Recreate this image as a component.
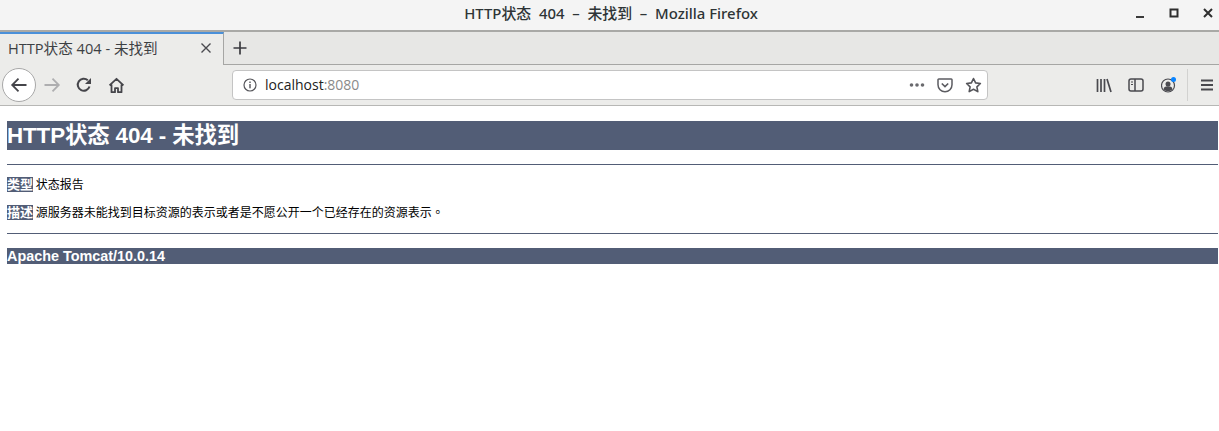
<div class="window">
	<header class="titlebar">
		<span class="title">HTTP状态&nbsp; 404 &nbsp;–&nbsp; 未找到 &nbsp;–&nbsp; Mozilla Firefox</span>
		<div class="winctl">
			<svg width="14" height="14" viewBox="0 0 14 14"><rect x="3" y="10" width="8" height="2" fill="#3a3a3a" /></svg>
			<svg width="14" height="14" viewBox="0 0 14 14"><rect x="3.500" y="3.500" width="7" height="7" fill="none" stroke="#2e2e2e" stroke-width="2" /></svg>
			<svg width="14" height="14" viewBox="0 0 14 14"><path d="M3 3l8 8M11 3l-8 8" stroke="#2e2e2e" stroke-width="2" fill="none" /></svg>
		</div>
	</header>

	<div class="tabbar">
		<div class="tab">
			<span class="tab-label">HTTP状态 404 - 未找到</span>
			<svg class="tab-close" width="12" height="12" viewBox="0 0 12 12"><path d="M1.500 1.500l9 9M10.500 1.500l-9 9" stroke="#4a4a4f" stroke-width="1.400" fill="none" /></svg>
		</div>
		<button class="newtab" aria-label="new tab">
			<svg width="16" height="16" viewBox="0 0 16 16"><path d="M8 1.500v13M1.500 8h13" stroke="#3b3b40" stroke-width="1.700" fill="none" /></svg>
		</button>
	</div>

	<nav class="navbar">
		<div class="back">
			<svg width="18" height="18" viewBox="0 0 18 18"><path d="M2 9h14.500M8.500 2.700L2.200 9l6.300 6.300" stroke="#45454a" stroke-width="1.800" fill="none" /></svg>
		</div>
		<svg class="forward" width="18" height="18" viewBox="0 0 18 18"><path d="M1.500 9h14.500M9.500 2.700L15.800 9l-6.300 6.300" stroke="#aeaeb0" stroke-width="1.800" fill="none" /></svg>
		<svg class="reload" width="16" height="16" viewBox="0 0 16 16"><path d="M13.500 9.500A6 6 0 1 1 11.800 3.300" stroke="#45454a" stroke-width="2" fill="none" /><path d="M15 1v6H9z" fill="#45454a" /></svg>
		<svg class="home" width="17" height="17" viewBox="0 0 17 17"><path d="M1.500 8.300L8.500 1.800l7 6.500M3.500 7.500v7.700h3.500v-4h3v4h3.500V7.500" stroke="#45454a" stroke-width="1.800" fill="none" stroke-linejoin="round" /></svg>

		<div class="urlbar">
			<svg class="info" width="14" height="14" viewBox="0 0 14 14"><circle cx="7" cy="7" r="6" stroke="#55555a" stroke-width="1.200" fill="none" /><rect x="6.300" y="6" width="1.400" height="4.300" fill="#55555a" /><rect x="6.300" y="3.500" width="1.400" height="1.500" fill="#55555a" /></svg>
			<span class="url">localhost<span class="port">:8080</span></span>
			<div class="url-actions">
				<svg width="16" height="6" viewBox="0 0 16 6"><circle cx="2.500" cy="3" r="1.800" fill="#6a6a6e" /><circle cx="8" cy="3" r="1.800" fill="#6a6a6e" /><circle cx="13.500" cy="3" r="1.800" fill="#6a6a6e" /></svg>
				<svg width="16" height="15" viewBox="0 0 16 15"><path d="M1.800 1h12.400a.8.8 0 0 1 .8.8v5a7 7 0 0 1-14 0v-5a.8.8 0 0 1 .8-.8z" stroke="#5c5c61" stroke-width="1.500" fill="none" /><path d="M4.800 5.500L8 8.500l3.200-3" stroke="#5c5c61" stroke-width="1.700" fill="none" /></svg>
				<svg width="17" height="16" viewBox="0 0 17 16"><path d="M8.500 1.500l2.100 4.400 4.800.6-3.500 3.300.9 4.800-4.300-2.400-4.300 2.400.9-4.800L1.600 6.500l4.800-.6z" stroke="#55555a" stroke-width="1.600" fill="none" stroke-linejoin="round" /></svg>
			</div>
		</div>

		<div class="tools">
			<svg width="16" height="15" viewBox="0 0 16 15"><path d="M1.500 1v13M5 1v13M8.500 1v13M11 1l4 13" stroke="#4a4a4f" stroke-width="1.700" fill="none" /></svg>
			<svg width="16" height="14" viewBox="0 0 16 14"><rect x="1" y="1" width="14" height="12" rx="2" stroke="#4a4a4f" stroke-width="1.500" fill="none" /><path d="M7 1v12" stroke="#4a4a4f" stroke-width="1.500" /><path d="M3 4h2M3 6.500h2" stroke="#4a4a4f" stroke-width="1" /></svg>
			<svg class="account" width="17" height="17" viewBox="0 0 17 17">
				<circle cx="7" cy="8.500" r="6.500" stroke="#4a4a4f" stroke-width="1.200" fill="none" />
				<circle cx="7" cy="7" r="2.500" fill="#4a4a4f" />
				<path d="M2.600 12.500a4.400 3.200 0 0 1 8.800 0a5.500 4.500 0 0 1-8.800 0z" fill="#4a4a4f" />
				<circle cx="12.500" cy="2.500" r="2.500" fill="#0a84ff" />
			</svg>
			<span class="divider"></span>
			<svg class="menu" width="14" height="12" viewBox="0 0 14 12"><path d="M1 1.500h12M1 6h12M1 10.500h12" stroke="#4a4a4f" stroke-width="1.800" fill="none" /></svg>
		</div>
	</nav>

	<main class="page">
		<h1>HTTP状态 404 - 未找到</h1>
		<hr class="line" />
		<p><b>类型</b> 状态报告</p>
		<p><b>描述</b> 源服务器未能找到目标资源的表示或者是不愿公开一个已经存在的资源表示<span class="stop">。</span></p>
		<hr class="line" />
		<h3>Apache Tomcat/10.0.14</h3>
	</main>
</div>

<style>
	:global(body) {
		margin: 0;
		background: #fff;
	}

	.window {
		display: flex;
		flex-direction: column;
		height: 431px;
		overflow: hidden;
		font-family: 'Open Sans', 'Noto Sans CJK SC', sans-serif;
	}

	.titlebar {
		position: relative;
		display: flex;
		align-items: center;
		justify-content: center;
		box-sizing: border-box;
		height: 32px;
		padding: 0 0 5px 3px;
		background: #f4f4f4;
		border-bottom: 2px solid #a9a9a6;
	}

	.title {
		font-family: 'Noto Sans', 'Noto Sans CJK SC', sans-serif;
		font-size: 14.900px;
		font-weight: 500;
		color: #2e3436;
	}

	.winctl {
		position: absolute;
		top: 6px;
		right: 4px;
		display: flex;
		gap: 20px;
	}

	.tabbar {
		display: flex;
		box-sizing: border-box;
		height: 33px;
		background: #e7e7e5;
		border-bottom: 1px solid #a6a6a4;
	}

	.tab {
		display: flex;
		align-items: center;
		justify-content: space-between;
		box-sizing: border-box;
		width: 224px;
		height: 33px;
		padding: 0 11px 4px 8px;
		background: #ececea;
		border-top: 2px solid #4a90d9;
		border-right: 1px solid #a6a6a4;
	}

	.tab-label {
		font-size: 14.600px;
		color: #3c4043;
	}

	.newtab {
		display: flex;
		align-items: center;
		padding: 0 0 1px 8px;
		border: 0;
		background: none;
	}

	.navbar {
		display: flex;
		align-items: center;
		box-sizing: border-box;
		height: 41px;
		padding: 0 0 0 2px;
		background: #ececea;
		border-bottom: 1px solid #b7b7b5;
	}

	.back {
		display: flex;
		align-items: center;
		justify-content: center;
		box-sizing: border-box;
		width: 34px;
		height: 34px;
		background: #fff;
		border: 1px solid #a8a8a8;
		border-radius: 50%;
	}

	.forward {
		margin-left: 7px;
	}

	.reload {
		margin-left: 15px;
	}

	.home {
		margin-left: 16px;
	}

	.urlbar {
		display: flex;
		align-items: center;
		box-sizing: border-box;
		width: 756px;
		height: 30px;
		margin-left: 107px;
		padding: 0 5px 0 10px;
		background: #fff;
		border: 1px solid #c4c4c4;
		border-radius: 4px;
	}

	.url {
		margin-left: 8px;
		padding-bottom: 2px;
		font-size: 14px;
		color: #222;
	}

	.port {
		color: #8a8a8a;
	}

	.url-actions {
		display: flex;
		align-items: center;
		gap: 12px;
		margin-left: auto;
	}

	.tools {
		display: flex;
		align-items: center;
		gap: 16px;
		margin-left: auto;
		padding-right: 5px;
	}

	.account {
		margin-left: 1px;
	}

	.divider {
		width: 1px;
		height: 32px;
		margin-left: -7px;
		background: #d2d2d0;
	}

	.menu {
		margin-left: -4px;
	}

	.page {
		padding: 15px 1px 0 7px;
		font-family: 'Liberation Sans', 'Noto Sans CJK SC', sans-serif;
		font-size: 12px;
		color: #000;
	}

	h1 {
		margin: 0;
		height: 29px;
		line-height: 29px;
		font-size: 22.400px;
		font-weight: 700;
		letter-spacing: -0.120px;
		color: #fff;
		background: #525d76;
	}

	.line {
		height: 1px;
		margin: 14px 0 0;
		border: 0;
		background: #525d76;
	}

	p {
		margin: 12px 0 0;
		height: 16px;
		line-height: 16px;
		font-size: 12px;
		word-spacing: -0.500px;
	}

	p + p {
		margin-top: 11px;
	}

	p b {
		font-size: 13px;
		color: #fff;
		background: #525d76;
	}

	.stop {
		font-family: 'Noto Sans CJK TC', sans-serif;
	}

	p + .line {
		margin-top: 13px;
	}

	h3 {
		margin: 14px 0 0;
		height: 16px;
		line-height: 16px;
		font-size: 14.400px;
		font-weight: 700;
		color: #fff;
		background: #525d76;
	}
</style>
